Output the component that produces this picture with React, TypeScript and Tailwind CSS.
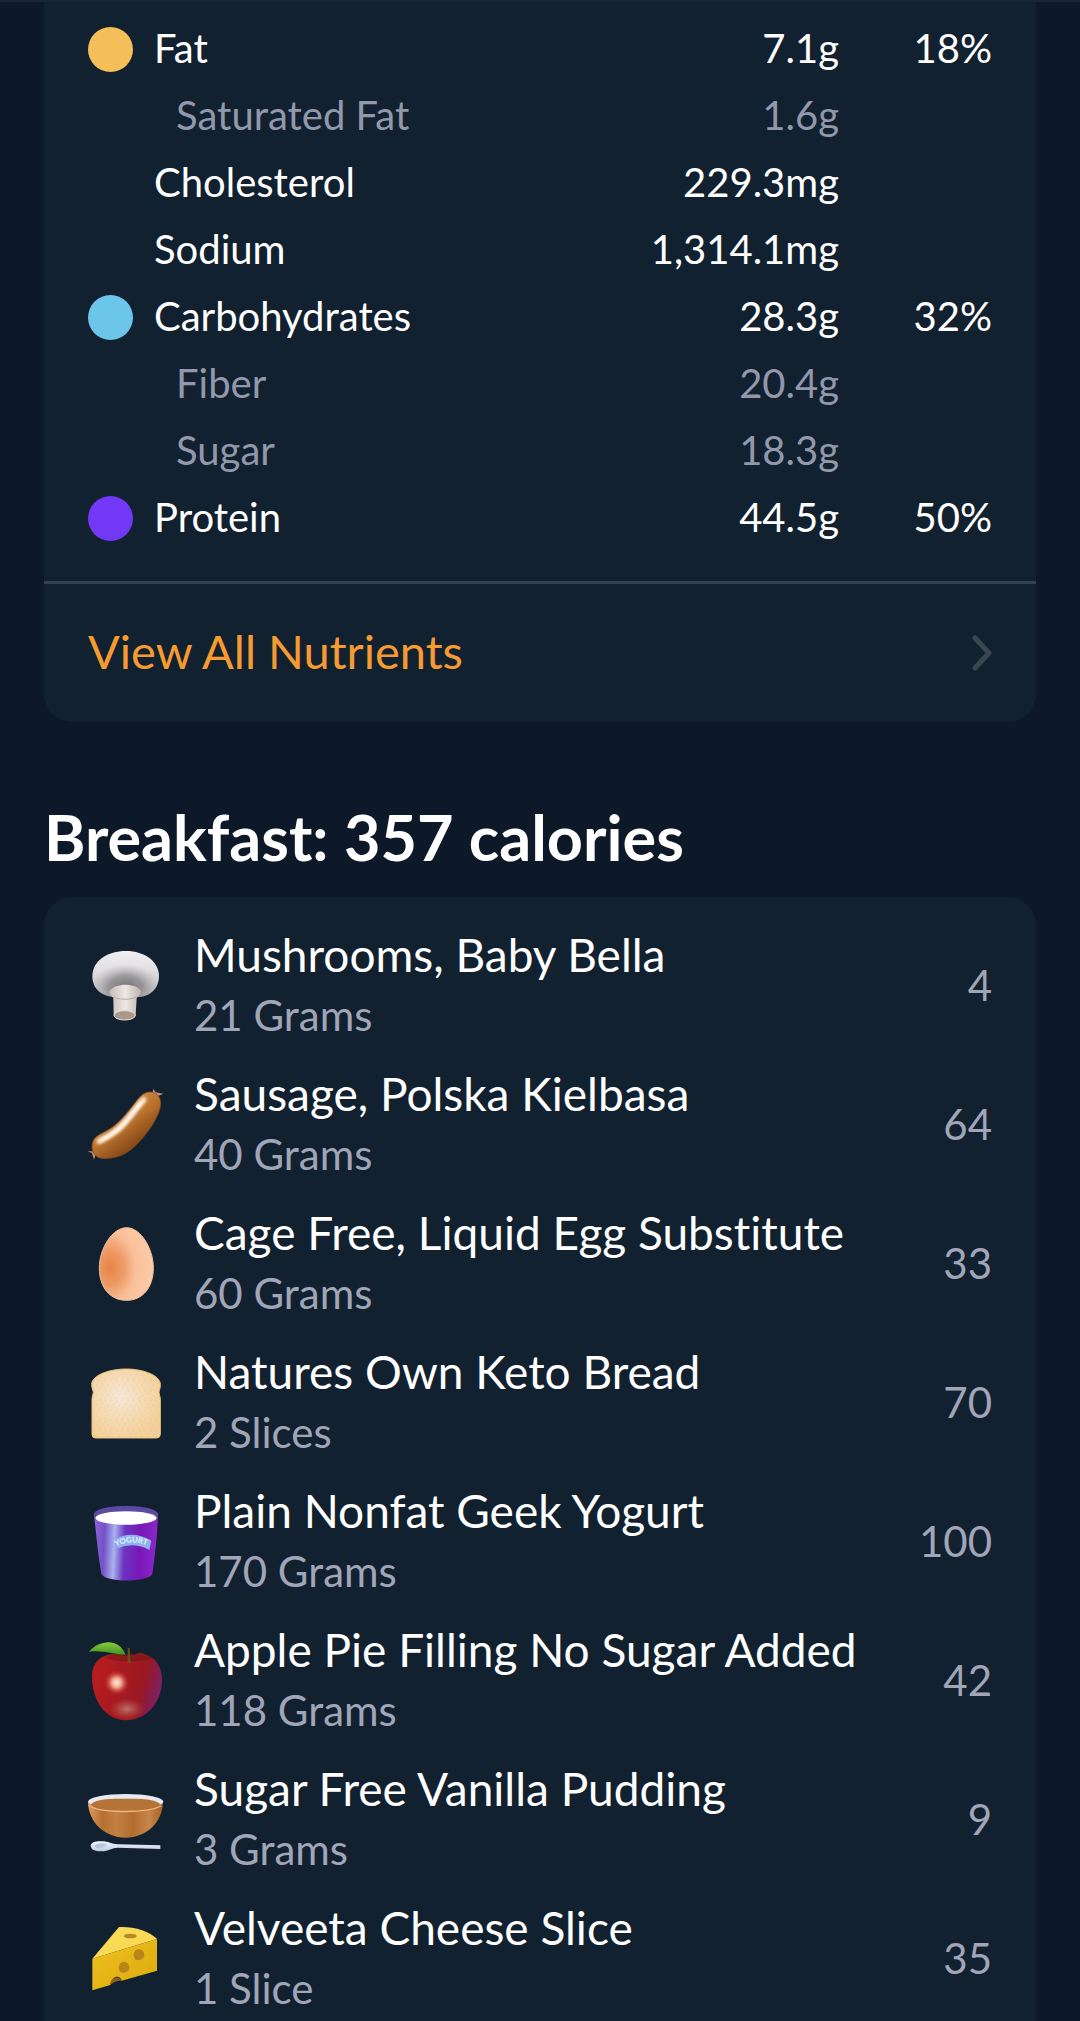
import type { ReactNode } from "react";
import clsx from "clsx";

interface Nutrient {
  name: string;
  amount: string;
  percent?: string;
  dot?: string;
  nested?: boolean;
}

interface Food {
  name: string;
  serving: string;
  calories: number;
  icon: ReactNode;
}

const nutrients: Nutrient[] = [
  { name: "Fat", amount: "7.1g", percent: "18%", dot: "bg-[#f4bf58]" },
  { name: "Saturated Fat", amount: "1.6g", nested: true },
  { name: "Cholesterol", amount: "229.3mg" },
  { name: "Sodium", amount: "1,314.1mg" },
  { name: "Carbohydrates", amount: "28.3g", percent: "32%", dot: "bg-[#6cc6ea]" },
  { name: "Fiber", amount: "20.4g", nested: true },
  { name: "Sugar", amount: "18.3g", nested: true },
  { name: "Protein", amount: "44.5g", percent: "50%", dot: "bg-[#7338f5]" },
];

const iconClass = "h-20 w-20 shrink-0 overflow-visible";

const MushroomIcon = () => (
  <svg viewBox="54 51 240 240" className={iconClass} aria-hidden="true">
    <defs>
      <linearGradient id="mushroom-cap" x1="0" y1="0" x2="0" y2="1">
        <stop offset="0" stopColor="#efeef0" />
        <stop offset="0.4" stopColor="#e2e0e2" />
        <stop offset="1" stopColor="#b9b6b9" />
      </linearGradient>
      <radialGradient id="mushroom-shade" cx="0.5" cy="0.78" r="0.5">
        <stop offset="0" stopColor="#6b696d" stopOpacity="0.9" />
        <stop offset="0.5" stopColor="#7c7a7e" stopOpacity="0.65" />
        <stop offset="1" stopColor="#a8a6a9" stopOpacity="0" />
      </radialGradient>
      <linearGradient id="mushroom-stem" x1="0" y1="0" x2="1" y2="0">
        <stop offset="0" stopColor="#c4bbb4" />
        <stop offset="0.5" stopColor="#eee8e3" />
        <stop offset="1" stopColor="#bcb2ab" />
      </linearGradient>
    </defs>
    <path
      d="M67 144C68 98 112 69 168 69c57 0 98 32 99 74 0 39-27 64-68 64h-65c-38-2-67-23-67-63Z"
      fill="url(#mushroom-cap)"
    />
    <path
      d="M67 144C68 98 112 69 168 69c57 0 98 32 99 74 0 39-27 64-68 64h-65c-38-2-67-23-67-63Z"
      fill="url(#mushroom-shade)"
    />
    <path
      d="M118 190c9-14 28-20 48-20s40 6 48 20c-2 9-7 14-14 20l-3 52c-8 18-54 20-66 0l-1-52c-7-5-11-11-12-20Z"
      fill="url(#mushroom-stem)"
    />
    <path d="M130 207c20 9 50 9 70 0" fill="none" stroke="#b3aaa4" strokeWidth="3" />
    <ellipse cx="164" cy="262" rx="32" ry="14" fill="#aa988c" stroke="#e4dcd6" strokeWidth="3" />
  </svg>
);

const SausageIcon = () => (
  <svg viewBox="54 47 240 240" className={iconClass} aria-hidden="true">
    <defs>
      <linearGradient id="sausage-skin" x1="0.3" y1="0.3" x2="0.65" y2="0.75">
        <stop offset="0" stopColor="#d08b46" />
        <stop offset="0.5" stopColor="#b8702c" />
        <stop offset="1" stopColor="#8b4c19" />
      </linearGradient>
      <filter id="sausage-soft" x="-20%" y="-20%" width="140%" height="140%">
        <feGaussianBlur stdDeviation="4" />
      </filter>
    </defs>
    <path d="m52 249 14 5 6 20 6-19-2-14-7 8Z" fill="#c49277" />
    <path d="m250 62 7 10 23 4-14 6-16-2-2-8Z" fill="#c49277" />
    <path
      d="M66 235c0-27 18-34 42-47 38-20 62-52 90-88 15-20 28-31 45-29 20 2 31 18 29 39-4 38-44 92-77 124-29 27-58 36-91 37-23 0-38-14-38-36Z"
      fill="url(#sausage-skin)"
      stroke="#7a4419"
      strokeWidth="2"
    />
    <path
      d="M88 219c30-15 51-27 76-55 21-23 38-50 57-69"
      fill="none"
      stroke="#ffe8cb"
      strokeWidth="17"
      strokeLinecap="round"
      filter="url(#sausage-soft)"
    />
    <path
      d="M96 213c26-13 44-24 66-48 18-20 34-43 51-62"
      fill="none"
      stroke="#fff"
      strokeWidth="7"
      strokeLinecap="round"
      filter="url(#sausage-soft)"
    />
  </svg>
);

const EggIcon = () => (
  <svg viewBox="54 43 240 240" className={iconClass} aria-hidden="true">
    <defs>
      <radialGradient id="egg-shell" cx="0.2" cy="0.55" r="0.8">
        <stop offset="0" stopColor="#e68546" />
        <stop offset="0.3" stopColor="#ed9a64" />
        <stop offset="0.6" stopColor="#fac09a" />
        <stop offset="1" stopColor="#fccba8" />
      </radialGradient>
    </defs>
    <path
      d="M170 57c44 0 80 66 80 120 0 61-33 98-80 98-49 0-82-37-82-98 0-54 37-120 82-120Z"
      fill="url(#egg-shell)"
      stroke="#f4bf9c"
      strokeWidth="3"
    />
  </svg>
);

const BreadIcon = () => (
  <svg viewBox="54 38 240 240" className={iconClass} aria-hidden="true">
    <defs>
      <radialGradient id="bread-crumb" cx="0.42" cy="0.4" r="0.65">
        <stop offset="0" stopColor="#f4e8da" />
        <stop offset="0.45" stopColor="#f5dcb6" />
        <stop offset="1" stopColor="#f3d09a" />
      </radialGradient>
      <pattern id="bread-speck" width="34" height="30" patternUnits="userSpaceOnUse">
        <g fill="#d79a55" opacity="0.3">
          <circle cx="5" cy="6" r="2" />
          <circle cx="20" cy="3" r="2" />
          <circle cx="29" cy="14" r="2" />
          <circle cx="12" cy="18" r="2" />
          <circle cx="23" cy="25" r="2" />
          <circle cx="3" cy="27" r="2" />
        </g>
      </pattern>
    </defs>
    <path
      d="M65 105c0-26 50-46 103-46 54 0 103 20 103 46 0 13-3 17-4 24l4 19v107q0 11-11 11H76q-10 0-10-11V148l4-19c-1-7-5-12-5-24Z"
      fill="url(#bread-crumb)"
      stroke="#ecbf7e"
      strokeWidth="3"
    />
    <path
      d="M69 105c0-24 48-42 99-42 52 0 99 18 99 42l-4 24 4 19v104q0 10-10 10H79q-9 0-9-10V148l4-19Z"
      fill="url(#bread-speck)"
    />
  </svg>
);

const YogurtIcon = () => (
  <svg viewBox="54 34 240 240" className={iconClass} aria-hidden="true">
    <defs>
      <linearGradient id="yogurt-cup" x1="0" y1="0" x2="1" y2="0.05">
        <stop offset="0" stopColor="#9a62d6" />
        <stop offset="0.18" stopColor="#7252c8" />
        <stop offset="0.34" stopColor="#a9b2ee" />
        <stop offset="0.5" stopColor="#6a35c2" />
        <stop offset="0.75" stopColor="#7a17b8" />
        <stop offset="1" stopColor="#8a28c9" />
      </linearGradient>
      <path id="yogurt-arc" d="M138 170q51-25 106 3" />
    </defs>
    <path
      d="M72 74c8-31 184-31 192 0-2 60-9 127-17 178-9 26-142 28-153 0C85 200 78 130 72 74Z"
      fill="url(#yogurt-cup)"
    />
    <path d="M72 74c4-33 188-33 192 0l-2 16H74Z" fill="#5b4a9f" />
    <ellipse cx="168" cy="85" rx="92" ry="20" fill="#fff" />
    <path d="M132 151q53-32 112 2l-6 28q-46-25-96-5Z" fill="#8fb2ee" />
    <text fontSize="23" className="fill-[#e6f2ff] font-['Lato',sans-serif] font-bold">
      <textPath href="#yogurt-arc">YOGURT</textPath>
    </text>
  </svg>
);

const AppleIcon = () => (
  <svg viewBox="54 45 240 240" className={iconClass} aria-hidden="true">
    <defs>
      <linearGradient id="apple-skin" x1="0" y1="0.4" x2="1" y2="0.65">
        <stop offset="0" stopColor="#b91c1f" />
        <stop offset="0.7" stopColor="#991822" />
        <stop offset="0.86" stopColor="#861c4e" />
        <stop offset="1" stopColor="#7b2270" />
      </linearGradient>
      <radialGradient id="apple-shine">
        <stop offset="0" stopColor="#fff0e2" />
        <stop offset="0.4" stopColor="#ef9c84" />
        <stop offset="1" stopColor="#c62a20" stopOpacity="0" />
      </radialGradient>
      <radialGradient id="apple-low">
        <stop offset="0" stopColor="#c08272" stopOpacity="0.85" />
        <stop offset="1" stopColor="#b5544c" stopOpacity="0" />
      </radialGradient>
      <linearGradient id="apple-leaf" x1="0" y1="0" x2="0" y2="1">
        <stop offset="0" stopColor="#8bcf3e" />
        <stop offset="1" stopColor="#3f8f1e" />
      </linearGradient>
    </defs>
    <path
      d="M66 153c0-39 26-63 62-65 19-1 30 4 46 4 17 0 24-11 46-6 37 8 58 42 56 83-2 66-49 117-107 117S66 233 66 153Z"
      fill="url(#apple-skin)"
    />
    <path d="M108 97c23-14 117-14 140 2-36 14-112 15-140-2Z" fill="#681812" opacity="0.5" />
    <circle cx="140" cy="173" r="38" fill="url(#apple-shine)" />
    <ellipse cx="171" cy="252" rx="54" ry="33" fill="url(#apple-low)" />
    <path d="M173 69h6l3 45h-9Z" fill="#655019" />
    <path d="M57 80c32-38 91-41 110 9-34 1-65-15-110-9Z" fill="url(#apple-leaf)" />
  </svg>
);

const BowlIcon = () => (
  <svg viewBox="54 41 240 240" className={iconClass} aria-hidden="true">
    <defs>
      <linearGradient id="bowl-side" x1="0" y1="0" x2="1" y2="0">
        <stop offset="0" stopColor="#dc9a5b" />
        <stop offset="0.2" stopColor="#b66f30" />
        <stop offset="0.38" stopColor="#c28043" />
        <stop offset="0.6" stopColor="#b46d2e" />
        <stop offset="0.82" stopColor="#c6854a" />
        <stop offset="1" stopColor="#a96225" />
      </linearGradient>
      <linearGradient id="spoon-metal" x1="0" y1="0" x2="0" y2="1">
        <stop offset="0" stopColor="#f5f8fe" />
        <stop offset="1" stopColor="#bccbe1" />
      </linearGradient>
    </defs>
    <path
      d="M54 110c1 59 49 107 113 107s111-48 112-107c-17 24-208 24-225 0Z"
      fill="url(#bowl-side)"
    />
    <ellipse cx="167" cy="109" rx="113" ry="23" fill="#e7e9f1" />
    <path
      d="M62 118c14-18 60-18 105-18s91 0 105 18c-15 27-195 27-210 0Z"
      fill="#b57338"
    />
    <path d="M56 119c24 24 168 27 218 3" fill="none" stroke="#efb680" strokeWidth="4" />
    <path
      d="M62 241c1-10 15-14 34-13 18 0 29 8 48 9l127 3v11l-127-4c-19 0-30 12-51 11-19 0-30-6-31-17Z"
      fill="url(#spoon-metal)"
    />
    <path d="M74 240c8-8 28-8 38-3-6 9-25 14-35 10Z" fill="#a9bad3" opacity="0.7" />
  </svg>
);

const CheeseIcon = () => (
  <svg viewBox="54 49 240 240" className={iconClass} aria-hidden="true">
    <defs>
      <linearGradient id="cheese-side" x1="0" y1="0" x2="1" y2="1">
        <stop offset="0" stopColor="#efc21f" />
        <stop offset="1" stopColor="#dba90e" />
      </linearGradient>
    </defs>
    <path d="m67 171 80-95c45-2 91 12 114 36Z" fill="#f8da55" />
    <path d="m67 171 194-59v95l-106 30c-4-17-29-18-34 13l-54 16Z" fill="url(#cheese-side)" />
    <path d="M120 250c3-28 30-27 35-12-11-3-24 4-35 12Z" fill="#8f611a" />
    <ellipse cx="181" cy="103" rx="19" ry="7" fill="#b68a20" />
    <ellipse cx="207" cy="160" rx="16" ry="18" fill="#b98418" />
    <path d="M196 174c13 5 26-4 27-17-2 23-18 27-27 17Z" fill="#dfaf35" />
    <ellipse cx="162" cy="198" rx="16" ry="18" fill="#b98418" />
    <path d="M151 212c13 5 26-4 27-17-2 23-18 27-27 17Z" fill="#dfaf35" />
  </svg>
);

const foods: Food[] = [
  { name: "Mushrooms, Baby Bella", serving: "21 Grams", calories: 4, icon: <MushroomIcon /> },
  { name: "Sausage, Polska Kielbasa", serving: "40 Grams", calories: 64, icon: <SausageIcon /> },
  { name: "Cage Free, Liquid Egg Substitute", serving: "60 Grams", calories: 33, icon: <EggIcon /> },
  { name: "Natures Own Keto Bread", serving: "2 Slices", calories: 70, icon: <BreadIcon /> },
  { name: "Plain Nonfat Geek Yogurt", serving: "170 Grams", calories: 100, icon: <YogurtIcon /> },
  { name: "Apple Pie Filling No Sugar Added", serving: "118 Grams", calories: 42, icon: <AppleIcon /> },
  { name: "Sugar Free Vanilla Pudding", serving: "3 Grams", calories: 9, icon: <BowlIcon /> },
  { name: "Velveeta Cheese Slice", serving: "1 Slice", calories: 35, icon: <CheeseIcon /> },
];

const NutrientRow = ({ name, amount, percent, dot, nested }: Nutrient) => (
  <tr className={clsx("h-[67px]", nested ? "text-[#9298ab]" : "text-white")}>
    <td className="w-[66px] p-0">
      {dot && <span className={clsx("block h-[45px] w-[45px] rounded-full", dot)} />}
    </td>
    <th scope="row" className={clsx("pb-1 text-left font-normal", nested && "pl-[22px]")}>
      {name}
    </th>
    <td className="pb-1 text-right">{amount}</td>
    <td className="w-[153px] pb-1 text-right">{percent}</td>
  </tr>
);

const FoodRow = ({ name, serving, calories, icon }: Food) => (
  <li className="flex items-center gap-[26px]">
    {icon}
    <div className="min-w-0 flex-1 leading-[60px]">
      <h3 className="text-[46px] text-white">{name}</h3>
      <p className="text-[#a0a5b7]">{serving}</p>
    </div>
    <span className="text-[#a0a5b7]">{calories}</span>
  </li>
);

const App = () => (
  <main className="min-h-screen border-t-2 border-[#182635] bg-[#0d1928] px-11 font-['Lato',sans-serif] [font-variant-ligatures:none]">
    <section className="rounded-b-[28px] bg-[#122130]">
      <div className="px-11 pt-3.5 pb-[29px]">
        <table className="w-full border-collapse text-[40px] leading-[60px]">
          <tbody>
            {nutrients.map((nutrient) => (
              <NutrientRow key={nutrient.name} {...nutrient} />
            ))}
          </tbody>
        </table>
      </div>
      <a
        href="#nutrients"
        className="flex h-[141px] items-center justify-between border-t-3 border-[#35414d] px-11 text-[47px] text-[#f59b31]"
      >
        <span className="pb-1">View All Nutrients</span>
        <svg
          viewBox="0 0 20 36"
          className="h-9 w-5 fill-none stroke-[#3c4651] stroke-5"
          strokeLinecap="round"
          strokeLinejoin="round"
          aria-hidden="true"
        >
          <path d="m3 3 14 15L3 33" />
        </svg>
      </a>
    </section>

    <h2 className="pt-[77px] pb-[22px] text-[63px] leading-[76px] font-bold text-white">
      Breakfast: 357 calories
    </h2>

    <section className="rounded-t-[28px] bg-[#122130] px-11 pt-7 pb-1">
      <ul className="flex flex-col gap-[19px] text-[42px]">
        {foods.map((food) => (
          <FoodRow key={food.name} {...food} />
        ))}
      </ul>
    </section>
  </main>
);

export default App;
